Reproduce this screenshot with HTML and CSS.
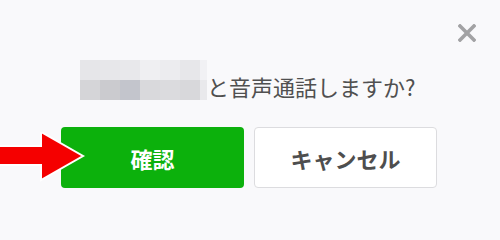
FILE: index.html
```html
<!DOCTYPE html>
<html lang="ja">

<head>
    <meta charset="UTF-8">
    <title>音声通話</title>
    <link rel="stylesheet" href="styles.css">
</head>

<body>
    <div class="dialog">
        <!-- close -->
        <button class="close-button" aria-label="閉じる">
            <svg width="18" height="18" viewBox="0 0 18 18">
                <path d="M2 2 L16 16 M16 2 L2 16" stroke="#a2a2a4" stroke-width="3.6" stroke-linecap="square" />
            </svg>
        </button>

        <div class="message">
            <span class="mosaic">
                <i style="background:#e6e6e9"></i><i style="background:#e7e7ea"></i><i style="background:#e8e8eb"></i><i style="background:#efeff2"></i><i style="background:#ececef"></i><i style="background:#e7e7ea"></i><i class="edge" style="background:#f1f1f4"></i>
                <i style="background:#d5d5d8"></i><i style="background:#cbcbcf"></i><i style="background:#c3c5cc"></i><i style="background:#d9d9dc"></i><i style="background:#dbdbde"></i><i style="background:#d8d8db"></i><i class="edge" style="background:#e9e9ec"></i>
            </span>
            <span class="text">と音声通話しますか?</span>
        </div>

        <div class="actions">
            <button class="btn btn-confirm">確認</button>
            <button class="btn btn-cancel">キャンセル</button>

            <!-- pointer arrow -->
            <svg class="arrow" width="90" height="50" viewBox="0 0 90 50">
                <path d="M-2 14 H41 V0 L83 24 L41 48 V33 H-2 Z" fill="#f50000" stroke="#ffffff" stroke-width="2" stroke-linejoin="miter" />
            </svg>
        </div>
    </div>
</body>

</html>
```

FILE: styles.css
```css
body {
    margin: 0;
    background-color: #f9f9fb;
    font-family: "Noto Sans CJK JP", "Noto Sans", sans-serif;
}

.dialog {
    position: relative;
    width: 500px;
    height: 240px;
    padding-top: 60px;
    box-sizing: border-box;
}

.close-button {
    position: absolute;
    top: 24px;
    right: 24px;
    width: 18px;
    height: 18px;
    padding: 0;
    border: none;
    background: none;
    cursor: pointer;
}

.close-button svg {
    display: block;
}

.message {
    display: flex;
    align-items: flex-end;
    margin-left: 80px;
    height: 40px;
}

.mosaic {
    display: grid;
    grid-template-columns: repeat(6, 20px) 7px;
    grid-template-rows: 20px 20px;
}

.mosaic i {
    display: block;
}

.text {
    font-size: 22px;
    line-height: 26px;
    color: #505050;
    margin-bottom: 1px;
}

.actions {
    position: relative;
    display: flex;
    gap: 10px;
    margin-top: 27px;
    padding-left: 61px;
}

.btn {
    width: 183px;
    height: 61px;
    border-radius: 4px;
    font-family: inherit;
    font-size: 22px;
    font-weight: bold;
    cursor: pointer;
}

.btn-confirm {
    background-color: #0cb10c;
    color: #ffffff;
    border: none;
}

.btn-cancel {
    background-color: #ffffff;
    color: #4e4e4e;
    border: 1px solid #dcdcdf;
}

.arrow {
    position: absolute;
    left: 0;
    top: 5px;
}
```
